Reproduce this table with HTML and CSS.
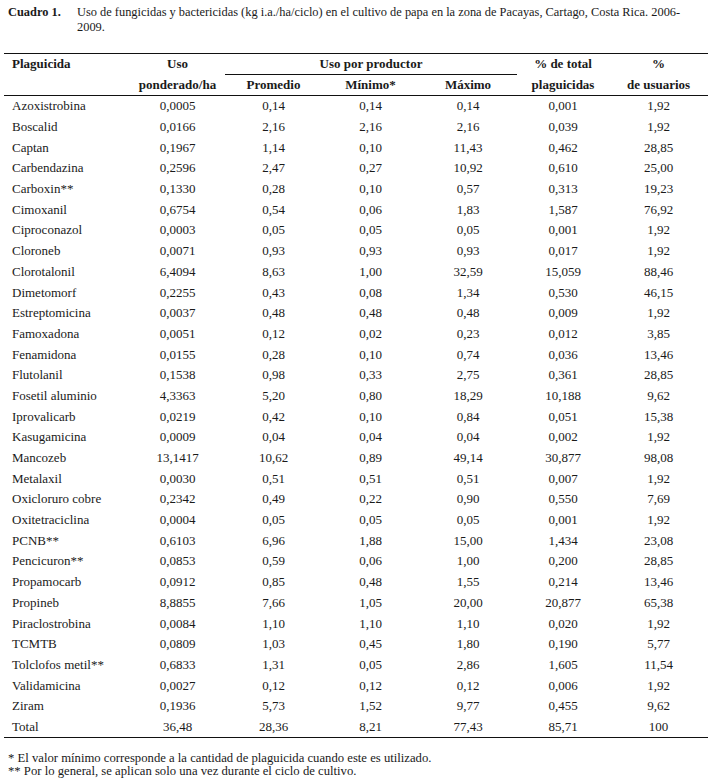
FILE: index.html
```html
<!DOCTYPE html>
<html lang="es">
<head>
<meta charset="utf-8">
<title>Cuadro 1</title>
<link rel="stylesheet" href="styles.css">
</head>
<body>
<div class="caption">
  <span class="cap-label">Cuadro 1.</span>
  <span class="cap-text">Uso de fungicidas y bactericidas (kg i.a./ha/ciclo) en el cultivo de papa en la zona de Pacayas, Cartago, Costa Rica. 2006-2009.</span>
</div>
<table class="data">
  <colgroup>
    <col class="c1"><col class="c2"><col class="c3"><col class="c4"><col class="c5"><col class="c6"><col class="c7">
  </colgroup>
  <thead>
    <tr class="h1">
      <th class="name">Plaguicida</th>
      <th>Uso</th>
      <th colspan="3" class="group">Uso por productor</th>
      <th>% de total</th>
      <th>%</th>
    </tr>
    <tr class="h2">
      <th></th>
      <th>ponderado/ha</th>
      <th>Promedio</th>
      <th>Mínimo*</th>
      <th>Máximo</th>
      <th>plaguicidas</th>
      <th>de usuarios</th>
    </tr>
  </thead>
  <tbody>
    <tr><td>Azoxistrobina</td><td>0,0005</td><td>0,14</td><td>0,14</td><td>0,14</td><td>0,001</td><td>1,92</td></tr>
    <tr><td>Boscalid</td><td>0,0166</td><td>2,16</td><td>2,16</td><td>2,16</td><td>0,039</td><td>1,92</td></tr>
    <tr><td>Captan</td><td>0,1967</td><td>1,14</td><td>0,10</td><td>11,43</td><td>0,462</td><td>28,85</td></tr>
    <tr><td>Carbendazina</td><td>0,2596</td><td>2,47</td><td>0,27</td><td>10,92</td><td>0,610</td><td>25,00</td></tr>
    <tr><td>Carboxin**</td><td>0,1330</td><td>0,28</td><td>0,10</td><td>0,57</td><td>0,313</td><td>19,23</td></tr>
    <tr><td>Cimoxanil</td><td>0,6754</td><td>0,54</td><td>0,06</td><td>1,83</td><td>1,587</td><td>76,92</td></tr>
    <tr><td>Ciproconazol</td><td>0,0003</td><td>0,05</td><td>0,05</td><td>0,05</td><td>0,001</td><td>1,92</td></tr>
    <tr><td>Cloroneb</td><td>0,0071</td><td>0,93</td><td>0,93</td><td>0,93</td><td>0,017</td><td>1,92</td></tr>
    <tr><td>Clorotalonil</td><td>6,4094</td><td>8,63</td><td>1,00</td><td>32,59</td><td>15,059</td><td>88,46</td></tr>
    <tr><td>Dimetomorf</td><td>0,2255</td><td>0,43</td><td>0,08</td><td>1,34</td><td>0,530</td><td>46,15</td></tr>
    <tr><td>Estreptomicina</td><td>0,0037</td><td>0,48</td><td>0,48</td><td>0,48</td><td>0,009</td><td>1,92</td></tr>
    <tr><td>Famoxadona</td><td>0,0051</td><td>0,12</td><td>0,02</td><td>0,23</td><td>0,012</td><td>3,85</td></tr>
    <tr><td>Fenamidona</td><td>0,0155</td><td>0,28</td><td>0,10</td><td>0,74</td><td>0,036</td><td>13,46</td></tr>
    <tr><td>Flutolanil</td><td>0,1538</td><td>0,98</td><td>0,33</td><td>2,75</td><td>0,361</td><td>28,85</td></tr>
    <tr><td>Fosetil aluminio</td><td>4,3363</td><td>5,20</td><td>0,80</td><td>18,29</td><td>10,188</td><td>9,62</td></tr>
    <tr><td>Iprovalicarb</td><td>0,0219</td><td>0,42</td><td>0,10</td><td>0,84</td><td>0,051</td><td>15,38</td></tr>
    <tr><td>Kasugamicina</td><td>0,0009</td><td>0,04</td><td>0,04</td><td>0,04</td><td>0,002</td><td>1,92</td></tr>
    <tr><td>Mancozeb</td><td>13,1417</td><td>10,62</td><td>0,89</td><td>49,14</td><td>30,877</td><td>98,08</td></tr>
    <tr><td>Metalaxil</td><td>0,0030</td><td>0,51</td><td>0,51</td><td>0,51</td><td>0,007</td><td>1,92</td></tr>
    <tr><td>Oxicloruro cobre</td><td>0,2342</td><td>0,49</td><td>0,22</td><td>0,90</td><td>0,550</td><td>7,69</td></tr>
    <tr><td>Oxitetraciclina</td><td>0,0004</td><td>0,05</td><td>0,05</td><td>0,05</td><td>0,001</td><td>1,92</td></tr>
    <tr><td>PCNB**</td><td>0,6103</td><td>6,96</td><td>1,88</td><td>15,00</td><td>1,434</td><td>23,08</td></tr>
    <tr><td>Pencicuron**</td><td>0,0853</td><td>0,59</td><td>0,06</td><td>1,00</td><td>0,200</td><td>28,85</td></tr>
    <tr><td>Propamocarb</td><td>0,0912</td><td>0,85</td><td>0,48</td><td>1,55</td><td>0,214</td><td>13,46</td></tr>
    <tr><td>Propineb</td><td>8,8855</td><td>7,66</td><td>1,05</td><td>20,00</td><td>20,877</td><td>65,38</td></tr>
    <tr><td>Piraclostrobina</td><td>0,0084</td><td>1,10</td><td>1,10</td><td>1,10</td><td>0,020</td><td>1,92</td></tr>
    <tr><td>TCMTB</td><td>0,0809</td><td>1,03</td><td>0,45</td><td>1,80</td><td>0,190</td><td>5,77</td></tr>
    <tr><td>Tolclofos metil**</td><td>0,6833</td><td>1,31</td><td>0,05</td><td>2,86</td><td>1,605</td><td>11,54</td></tr>
    <tr><td>Validamicina</td><td>0,0027</td><td>0,12</td><td>0,12</td><td>0,12</td><td>0,006</td><td>1,92</td></tr>
    <tr><td>Ziram</td><td>0,1936</td><td>5,73</td><td>1,52</td><td>9,77</td><td>0,455</td><td>9,62</td></tr>
    <tr class="total"><td>Total</td><td>36,48</td><td>28,36</td><td>8,21</td><td>77,43</td><td>85,71</td><td>100</td></tr>
  </tbody>
</table>
<div class="notes">
  <p>* El valor mínimo corresponde a la cantidad de plaguicida cuando este es utilizado.</p>
  <p>** Por lo general, se aplican solo una vez durante el ciclo de cultivo.</p>
</div>
</body>
</html>
```

FILE: styles.css
```css
html, body {
  margin: 0;
  padding: 0;
  background: #ffffff;
}
body {
  font-family: "Liberation Serif", "Times New Roman", serif;
  color: #1a1a1a;
  font-size: 13px;
  padding: 5px 0 0 4px;
}
.caption {
  display: flex;
  line-height: 15px;
  font-size: 12.4px;
  padding-left: 4px;
  width: 700px;
}
.cap-label {
  flex: 0 0 69px;
  font-weight: bold;
}
.cap-text {
  flex: 1;
}
.data {
  margin-top: 18px;
  width: 704px;
  border-collapse: collapse;
  table-layout: fixed;
  border-top: 1.5px solid #111;
  border-bottom: 1.5px solid #111;
}
.c1 { width: 126px; }
.c2 { width: 95px; }
.c3 { width: 97px; }
.c4 { width: 97px; }
.c5 { width: 98px; }
.c6 { width: 92px; }
.c7 { width: 99px; }
.data th {
  font-weight: bold;
  text-align: center;
  padding: 0;
  white-space: nowrap;
}
.data .h1 th {
  height: 20px;
}
.data th.name {
  text-align: left;
  padding-left: 8px;
}
.data .h1 th.group {
  border-bottom: 1px solid #111;
}
.data .h2 th {
  height: 20px;
  border-bottom: 1px solid #111;
}
.data td {
  text-align: center;
  padding: 0;
  height: 20.7px;
  white-space: nowrap;
}
.data td:first-child {
  text-align: left;
  padding-left: 8px;
}
.notes {
  margin-top: 14px;
  padding-left: 4px;
  font-size: 12.7px;
  line-height: 13px;
}
.notes p {
  margin: 0;
}
```
